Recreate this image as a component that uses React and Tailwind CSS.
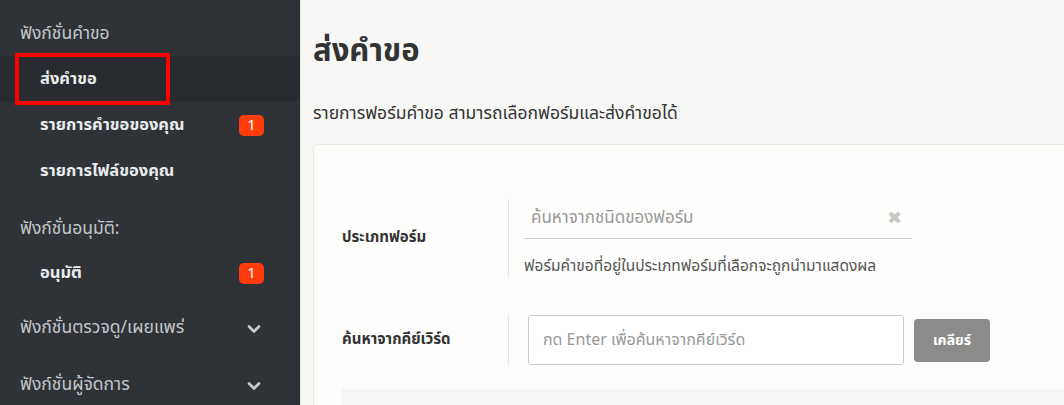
import { ChevronDown } from 'lucide-react';

const thai = { fontFamily: '"Noto Sans Thai", Tahoma, "DejaVu Sans", "Noto Sans", sans-serif' };

function Badge({ n }) {
  return (
    <span className="inline-flex items-center justify-center w-[25px] h-[21px] rounded-[5px] bg-[#ff3d0b] text-white text-[15px] leading-none font-normal">
      {n}
    </span>
  );
}

function SideHeader({ children, chevron, className = '' }) {
  return (
    <div className={'flex items-center justify-between pl-5 pr-[36px] text-[17.5px] text-[#c3c6ca] ' + className}>
      <span>{children}</span>
      {chevron && <ChevronDown size={20} strokeWidth={3.2} className="text-[#c9c9c9]" />}
    </div>
  );
}

function SideItem({ children, badge, active }) {
  return (
    <div className={'relative flex items-center justify-between h-[46px] pl-10 pr-[36px] text-[16.5px] font-bold text-[#e9ebed] ' + (active ? 'bg-[#282b30]' : '')}>
      <span>{children}</span>
      {badge && <Badge n={badge} />}
      {active && <div className="absolute left-[15px] top-[-3px] w-[155px] h-[52px] border-[4px] border-[#ff0000]" />}
    </div>
  );
}

export default function App() {
  return (
    <div className="flex w-[1064px] h-[405px] overflow-hidden" style={thai}>
      <aside className="w-[300px] shrink-0 bg-[#2f3338] pt-[13px]">
        <SideHeader className="h-[43px]">ฟังก์ชั่นคำขอ</SideHeader>
        <SideItem active>ส่งคำขอ</SideItem>
        <SideItem badge="1">รายการคำขอของคุณ</SideItem>
        <SideItem>รายการไฟล์ของคุณ</SideItem>
        <SideHeader className="h-[56px] pt-[14px]">ฟังก์ชั่นอนุมัติ:</SideHeader>
        <SideItem badge="1">อนุมัติ</SideItem>
        <SideHeader chevron className="h-[57px] mt-[4px]">ฟังก์ชั่นตรวจดู/เผยแพร่</SideHeader>
        <SideHeader chevron className="h-[57px]">ฟังก์ชั่นผู้จัดการ</SideHeader>
      </aside>

      <main className="flex-1 min-w-0 overflow-hidden bg-[#f7f7f5] border-l border-[#e9e9e7] pl-[12px] text-[#333]">
        <h1 className="m-0 pt-[32px] text-[31px] leading-[40px] font-bold text-[#333]">ส่งคำขอ</h1>
        <div className="mt-[30px] text-[17.5px] leading-[24px]">รายการฟอร์มคำขอ สามารถเลือกฟอร์มและส่งคำขอได้</div>

        <div className="mt-[18px] w-[800px] bg-[#fdfdfb] border border-[#ebebe8] rounded-[4px] pt-[54px] pl-[28px] h-[300px]">
          <div className="flex items-center">
            <div className="w-[166px] text-[15px] font-bold">ประเภทฟอร์ม</div>
            <div className="border-l border-[#e3e3e1] pl-[15px] h-[78px]">
              <div className="flex items-center justify-between w-[388px] h-[40px] border-b border-[#cfcfcd] pl-[7px] pr-[10px]">
                <span className="text-[17px] text-[#9a9a9a]">ค้นหาจากชนิดของฟอร์ม</span>
                <span className="text-[#c8c8c8] text-[18px] font-bold leading-none">✖</span>
              </div>
              <div className="mt-[16px] text-[15.5px] text-[#555]">ฟอร์มคำขอที่อยู่ในประเภทฟอร์มที่เลือกจะถูกนำมาแสดงผล</div>
            </div>
          </div>

          <div className="flex items-center mt-[38px]">
            <div className="w-[166px] text-[15px] font-bold">ค้นหาจากคีย์เวิร์ด</div>
            <div className="flex items-center border-l border-[#e3e3e1] pl-[19px] h-[50px]">
              <div className="flex items-center w-[376px] h-[50px] border border-[#cccccc] rounded-[3px] bg-white pl-[14px] text-[16px] text-[#999]">
                กด Enter เพื่อค้นหาจากคีย์เวิร์ด
              </div>
              <button className="ml-[10px] w-[76px] h-[43px] rounded-[4px] bg-[#8b8b89] text-white text-[14px] font-bold">เคลียร์</button>
            </div>
          </div>

          <div className="mt-[24px] h-[40px] bg-[#f5f5f3]" />
        </div>
      </main>
    </div>
  );
}
